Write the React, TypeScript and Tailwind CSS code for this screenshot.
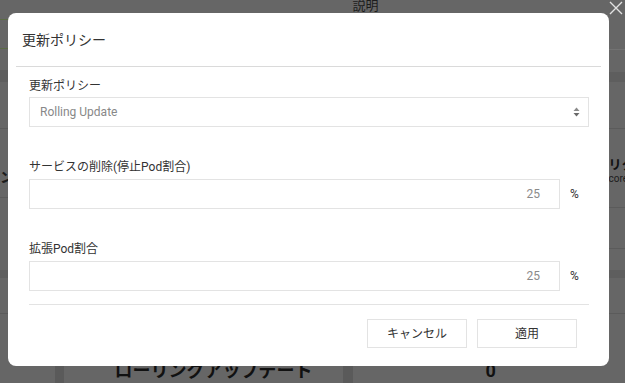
import React from "react";

const SelectArrows = () => (
  <svg width="7" height="10" viewBox="0 0 7 10">
    <path d="M3.5 0.5 L6.5 4 L0.5 4 Z" fill="#8a8a8a" />
    <path d="M3.5 9.5 L6.5 6 L0.5 6 Z" fill="#6a6a6a" />
  </svg>
);

const CloseIcon = () => (
  <svg width="14" height="14" viewBox="0 0 14 14">
    <path d="M1 1 L13 13 M13 1 L1 13" stroke="#e2e2e2" strokeWidth="1.4" />
  </svg>
);

const Backdrop = () => (
  <div className="grid grid-cols-2 h-[383px]">
    {/* left half of the page behind */}
    <div className="flex flex-col">
      <div className="h-[19px]" />
      <div className="h-[29px] border-t border-[#5c6b46]" />
      <div className="h-[22px] border-t border-[#5c6b46]" />
      <div className="h-[12px] bg-[#5e5e5e]" />
      <div className="h-[46px]" />
      <div className="h-[69px] border-t border-[#5b5b5b] pt-[40px] text-[14px] font-bold leading-[16px] text-[#1c1c1c]">
        ン
      </div>
      <div className="h-[73px] border-t border-[#5b5b5b]" />
      <div className="h-[8px] bg-[#5e5e5e]" />
      <div className="h-[35px]" />
      <div className="flex-1 border-t border-[#5b5b5b] flex items-end">
        <div className="ml-[55px] w-[10px] h-[17px] bg-[#5a5a5a]" />
        <div className="ml-[51px] mb-[3px] text-[18px] font-bold leading-[18px] text-[#111] whitespace-nowrap">
          ローリングアップデート
        </div>
      </div>
    </div>
    {/* right half */}
    <div className="flex flex-col">
      <div className="h-[49px] pl-[40px]">
        <div className="-mt-[2px] text-[13px] leading-[16px] text-[#1c1c1c]">説明</div>
      </div>
      <div className="h-[23px] border-t border-[#727272]" />
      <div className="h-[10px] bg-[#5e5e5e]" />
      <div className="h-[46px]" />
      <div className="h-[79px] border-t border-[#5b5b5b] flex flex-col pl-[296px] pt-[29px]">
        <div className="text-[13px] font-bold leading-[14px] text-[#111] whitespace-nowrap">リク</div>
        <div className="text-[10px] leading-[14px] text-[#1c1c1c] whitespace-nowrap">core</div>
      </div>
      <div className="h-[41px] border-t border-[#5b5b5b]" />
      <div className="h-[22px] border-t border-[#5b5b5b]" />
      <div className="h-[8px] bg-[#5e5e5e]" />
      <div className="h-[35px]" />
      <div className="flex-1 border-t border-[#5b5b5b] flex items-end">
        <div className="ml-[30px] w-[10px] h-[17px] bg-[#5a5a5a]" />
        <div className="ml-[133px] mb-[3px] text-[18px] font-bold leading-[18px] text-[#111]">0</div>
      </div>
    </div>
  </div>
);

const PercentInput = ({ value }: { value: string }) => (
  <div className="flex items-center">
    <div className="w-[531px] h-[30px] border border-[#e3e3e3] flex items-center justify-end pr-[19px] text-[12px] text-[#8a8a8a]">
      {value}
    </div>
    <div className="flex-1 text-center text-[12px] text-[#333]">%</div>
  </div>
);

export default function App() {
  return (
    <div className="relative w-[625px] h-[383px] overflow-hidden bg-[#666666] font-['Roboto','Noto_Sans_CJK_JP',sans-serif]">
      <Backdrop />

      <div className="absolute inset-0">
        <div className="absolute right-[2px] top-[1px]">
          <CloseIcon />
        </div>

        <div className="mt-[13px] ml-[8px] w-[601px] h-[353px] bg-white rounded-[8px] flex flex-col">
          <div className="h-[53px] pt-[2px] pl-[14px] flex items-center text-[14px] text-[#333]">
            更新ポリシー
          </div>
          <div className="mx-[8px] h-px bg-[#dadada]" />

          <div className="pl-[21px] pr-[20px] pt-[10px] flex flex-col">
            <div className="text-[12px] leading-[18px] text-[#333] mb-[2px]">更新ポリシー</div>
            <div className="h-[30px] border border-[#e3e3e3] flex items-center justify-between pl-[10px] pr-[8px]">
              <span className="text-[12px] text-[#888]">Rolling Update</span>
              <SelectArrows />
            </div>

            <div className="mt-[31px] mb-[3px] text-[12px] leading-[18px] text-[#333]">
              サービスの削除(停止Pod割合)
            </div>
            <PercentInput value="25" />

            <div className="mt-[31px] mb-[3px] text-[12px] leading-[18px] text-[#333]">拡張Pod割合</div>
            <PercentInput value="25" />

            <div className="mt-[13px] h-px bg-[#e3e3e3]" />

            <div className="mt-[14px] pr-[12px] flex justify-end gap-[10px]">
              <button className="w-[100px] h-[29px] border border-[#e3e3e3] bg-white text-[12px] text-[#333]">
                キャンセル
              </button>
              <button className="w-[100px] h-[29px] border border-[#e3e3e3] bg-white text-[12px] text-[#333]">
                適用
              </button>
            </div>
          </div>
        </div>
      </div>
    </div>
  );
}
